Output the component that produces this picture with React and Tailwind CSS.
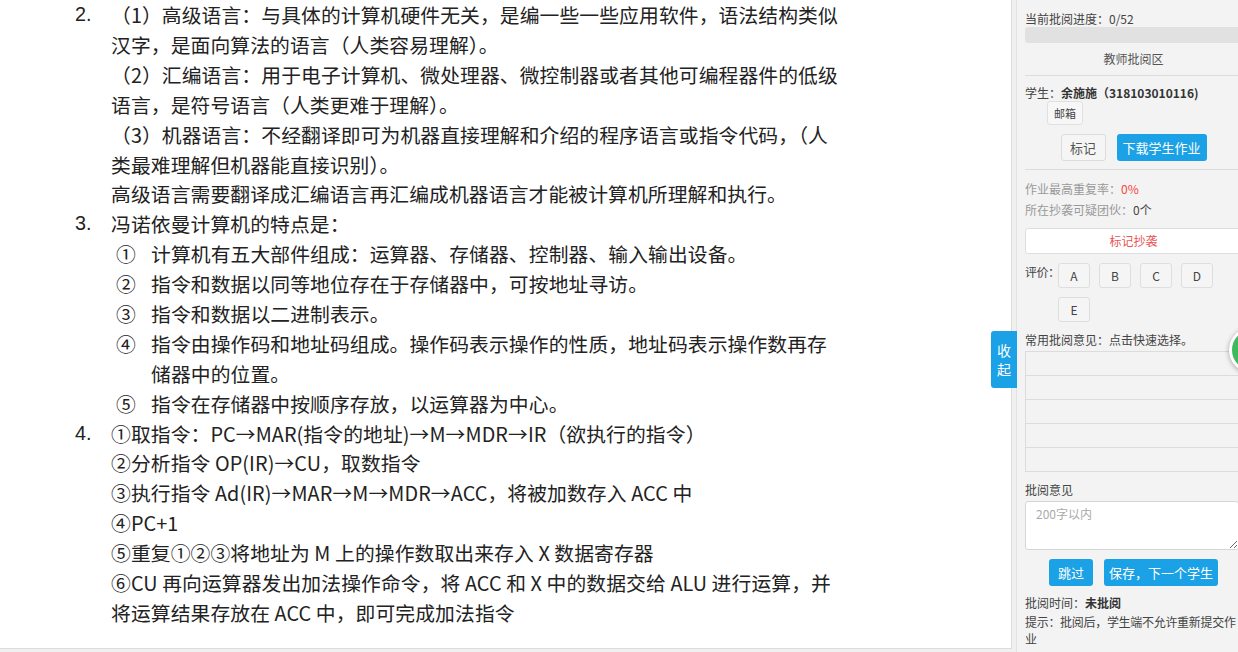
import React from "react";

const docFont = { fontFamily: '"Noto Sans CJK SC", "Liberation Sans", sans-serif' };

const item2 = [
  "（1）高级语言：与具体的计算机硬件无关，是编一些一些应用软件，语法结构类似",
  "汉字，是面向算法的语言（人类容易理解）。",
  "（2）汇编语言：用于电子计算机、微处理器、微控制器或者其他可编程器件的低级",
  "语言，是符号语言（人类更难于理解）。",
  "（3）机器语言：不经翻译即可为机器直接理解和介绍的程序语言或指令代码，（人",
  "类最难理解但机器能直接识别）。",
  "高级语言需要翻译成汇编语言再汇编成机器语言才能被计算机所理解和执行。",
];

const item3 = [
  ["①", "计算机有五大部件组成：运算器、存储器、控制器、输入输出设备。"],
  ["②", "指令和数据以同等地位存在于存储器中，可按地址寻访。"],
  ["③", "指令和数据以二进制表示。"],
  ["④", "指令由操作码和地址码组成。操作码表示操作的性质，地址码表示操作数再存"],
  ["", "储器中的位置。"],
  ["⑤", "指令在存储器中按顺序存放，以运算器为中心。"],
];

const item4 = [
  "①取指令：PC→MAR(指令的地址)→M→MDR→IR（欲执行的指令）",
  "②分析指令 OP(IR)→CU，取数指令",
  "③执行指令 Ad(IR)→MAR→M→MDR→ACC，将被加数存入 ACC 中",
  "④PC+1",
  "⑤重复①②③将地址为 M 上的操作数取出来存入 X 数据寄存器",
  "⑥CU 再向运算器发出加法操作命令，将 ACC 和 X 中的数据交给 ALU 进行运算，并",
  "将运算结果存放在 ACC 中，即可完成加法指令",
];

const Line = ({ num, children }) => (
  <div className="flex h-[29.9px] items-center whitespace-nowrap">
    <div className="w-[36px] shrink-0 tracking-normal" style={{ fontFamily: '"Liberation Sans", sans-serif' }}>{num}</div>
    <div>{children}</div>
  </div>
);

const Document = () => (
  <div className="w-[1012px] shrink-0 h-[649px] bg-white border-r border-b border-[#dcdcdc] overflow-hidden">
    <div className="pl-[75px] text-[19.8px] tracking-[0.1px] text-[#222]" style={docFont}>
      {item2.map((t, i) => (
        <Line key={"a" + i} num={i === 0 ? "2." : ""}>{t}</Line>
      ))}
      <Line num="3.">冯诺依曼计算机的特点是：</Line>
      {item3.map(([c, t], i) => (
        <Line key={"b" + i} num="">
          <div className="flex">
            <span className="w-[40px] pl-[5px]">{c}</span>
            <span>{t}</span>
          </div>
        </Line>
      ))}
      {item4.map((t, i) => (
        <Line key={"c" + i} num={i === 0 ? "4." : ""}>{t}</Line>
      ))}
    </div>
  </div>
);

const GradeBtn = ({ children }) => (
  <button className="w-[32px] h-[25px] border border-[#dedede] rounded-[3px] bg-[#f5f5f5] text-[12px] text-[#444]">
    {children}
  </button>
);

const ReviewPanel = () => (
  <div className="w-[234px] shrink-0 h-[652px] bg-[#f3f3f3] border-l border-[#e2e2e2] px-2 pt-[10px] text-[12px] text-[#444]" style={docFont}>
    <div className="leading-[17px]">当前批阅进度：0/52</div>
    <div className="h-4 rounded-[3px] bg-[#e1e1e1]" />
    <div className="h-[33px] flex items-center justify-center border-b border-[#dcdcdc] text-[#555]">教师批阅区</div>

    <div className="mt-[8px] leading-[17px]">
      学生：<span className="font-bold text-[#333]">余施施（318103010116)</span>
    </div>
    <button className="ml-[22px] w-[36px] h-[24px] border border-[#e0e0e0] rounded-[3px] bg-[#f7f7f7] text-[11px] text-[#444]">
      邮箱
    </button>
    <div className="mt-[9px] flex justify-center gap-[11px]">
      <button className="w-[45px] h-[27px] border border-[#dcdcdc] rounded-[3px] bg-[#f5f5f5] text-[13px] text-[#555]">标记</button>
      <button className="w-[90px] h-[27px] rounded-[3px] bg-[#1ba1e6] text-[13px] text-white">下载学生作业</button>
    </div>
    <div className="mt-[8px] border-b border-[#dcdcdc]" />

    <div className="mt-[8px] leading-[21px] text-[#999]">
      作业最高重复率：<span className="text-[#f04848]">0%</span>
    </div>
    <div className="leading-[21px] text-[#999]">
      所在抄袭可疑团伙：<span className="text-[#444]">0个</span>
    </div>
    <div className="mt-[8px] h-[26px] flex items-center justify-center bg-white border border-[#dedede] rounded-[3px] text-[#e85555]">
      标记抄袭
    </div>

    <div className="mt-[9px] flex">
      <div className="w-[33px] shrink-0 leading-[18px] whitespace-nowrap tracking-[-0.5px]">评价：</div>
      <div className="flex flex-wrap gap-[9px] w-[170px]">
        <GradeBtn>A</GradeBtn>
        <GradeBtn>B</GradeBtn>
        <GradeBtn>C</GradeBtn>
        <GradeBtn>D</GradeBtn>
        <GradeBtn>E</GradeBtn>
      </div>
    </div>

    <div className="mt-[9px] leading-[18px]">常用批阅意见：点击快速选择。</div>
    <div className="mt-[2px] border-l border-b border-[#dcdcdc]">
      {[0, 1, 2, 3, 4].map((r) => (
        <div key={r} className="h-[24px] border-t border-[#dcdcdc]" />
      ))}
    </div>

    <div className="mt-[9px] leading-[18px]">批阅意见</div>
    <textarea
      className="mt-[2px] block w-[214px] h-[49px] bg-white border border-[#d6d6d6] rounded-[3px] px-[10px] py-[3px] text-[12px] placeholder:text-[#aaa] resize-y"
      placeholder="200字以内"
    />
    <div className="mt-[9px] flex justify-center gap-[11px]">
      <button className="w-[44px] h-[27px] rounded-[3px] bg-[#1ba1e6] text-[13px] text-white">跳过</button>
      <button className="w-[114px] h-[27px] rounded-[3px] bg-[#1ba1e6] text-[13px] text-white">保存，下一个学生</button>
    </div>
    <div className="mt-[8px] leading-[18px]">
      批阅时间：<span className="font-bold text-[#333]">未批阅</span>
    </div>
    <div className="mt-[1px] w-[212px] leading-[17px] tracking-[-0.3px]">提示：批阅后，学生端不允许重新提交作业</div>
  </div>
);

export default function App() {
  return (
    <div className="relative flex w-[1238px] h-[652px] overflow-hidden bg-[#f0f0f0]">
      <Document />
      <div className="w-[4px] shrink-0 bg-[#f0f0f0]" />
      <ReviewPanel />

      <div
        className="absolute left-[991px] top-[331px] w-[26px] h-[57px] rounded-l-[3px] bg-[#1ba1e6] text-white text-[14px] leading-[19px] flex flex-col items-center justify-center"
        style={docFont}
      >
        <span>收</span>
        <span>起</span>
      </div>

      <div className="absolute left-[1229px] top-[327px] w-[46px] h-[46px] rounded-full bg-[#3dba5c] border-[3px] border-white shadow-[0_1px_5px_rgba(0,0,0,0.35)] flex items-center justify-center">
        <div className="w-[14px] h-[3px] bg-white" />
      </div>
    </div>
  );
}
